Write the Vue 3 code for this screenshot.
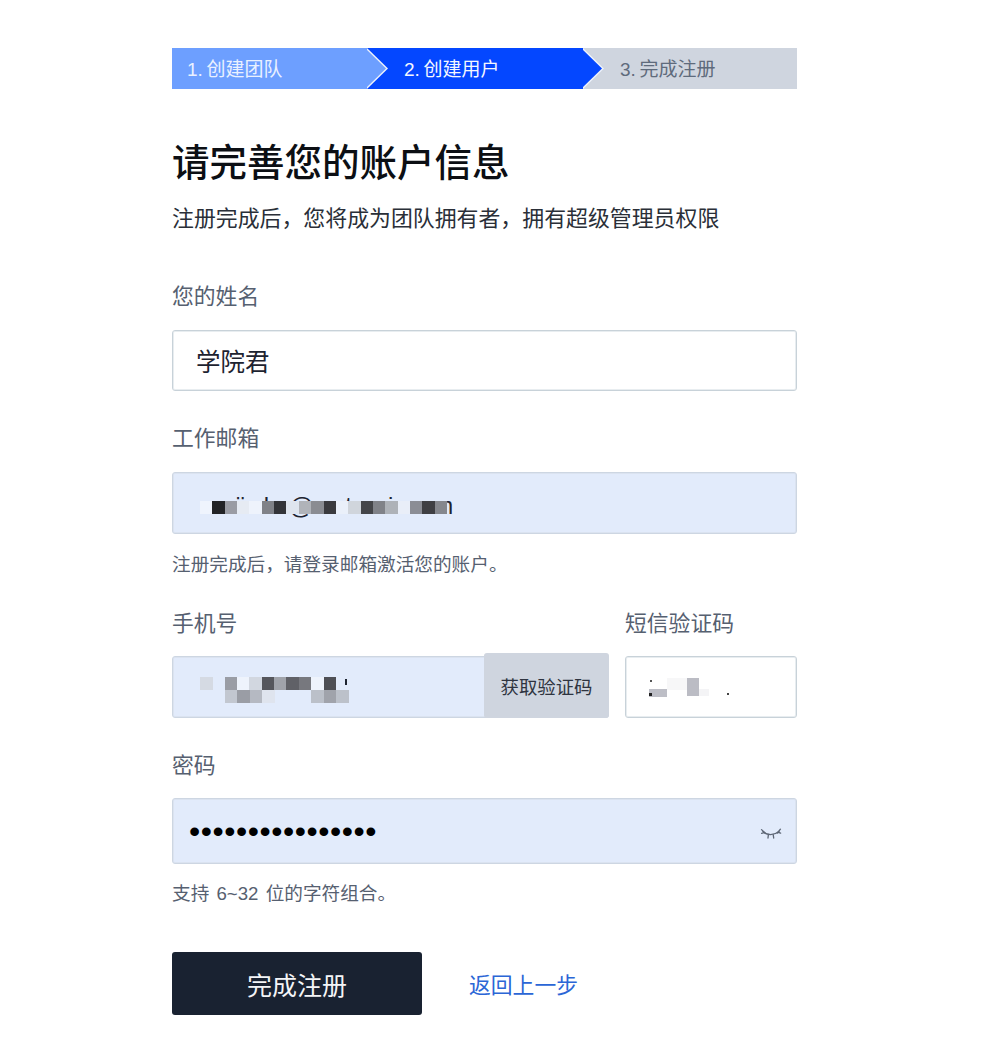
<script setup>
import { ref } from 'vue';

const showPassword = ref(false);

const steps = [
  { label: '1. 创建团队', state: 'done' },
  { label: '2. 创建用户', state: 'active' },
  { label: '3. 完成注册', state: 'todo' },
];

const makeRow = (startX, y, h, colors) =>
  colors.map((color, i) => ({ x: startX + i * 12.35, y, w: 12.5, h, color })).filter(c => c.color);

// the blurred-out parts of the form, relative to their input
const emailCells = makeRow(28, 29, 13, [
  '#eff4fd', '#222326', '#9a9ca4', '#e6ebf3', '#eef3fc', '#808288', '#333438', '#dfe5ee', '#b0b3b9',
  '#8a8c92', '#3a3a3e', '#eaf0fa', '#d0d5dc', '#444549', '#808288', '#aeb2b8', '#e9eef8', '#8b8d95',
  '#3f3f43', '#85878d',
]);

const phoneCells = [
  ...makeRow(28, 21, 13, [
    '#d5dae3', null, '#9a9da5', '#eef3fc', '#d2d7e0', '#55565c', '#a0a3aa', '#606167', '#77787e', '#eef3fc', '#4e4f55',
  ]),
  ...makeRow(53, 34, 13, ['#c2c7d0', '#9a9da5', '#b5b9c2', '#dfe4ee', null, null, null, '#bbc0c9', '#a0a3ab', '#bcc1ca']),
  { x: 173, y: 23, w: 2, h: 6, color: '#1d2330' },
];

const codeCells = [
  { x: 42, y: 22, w: 20, h: 12, color: '#f7f7f8' },
  { x: 62, y: 22, w: 12, h: 18, color: '#bbbcc4' },
  { x: 24, y: 33, w: 18, h: 8, color: '#bdbec6' },
  { x: 74, y: 33, w: 10, h: 7, color: '#f4f4f6' },
  { x: 25, y: 24, w: 2, h: 2, color: '#555' },
  { x: 24, y: 37, w: 3, h: 3, color: '#222' },
  { x: 102, y: 37, w: 2, h: 2, color: '#444' },
];
</script>

<template>
  <div class="page">
    <div class="steps">
      <div v-for="step in steps" :key="step.label" class="step" :class="step.state">{{ step.label }}</div>
    </div>

    <h1 class="title">请完善您的账户信息</h1>
    <p class="subtitle">注册完成后，您将成为团队拥有者，拥有超级管理员权限</p>

    <div class="field first">
      <label class="label">您的姓名</label>
      <input class="input name" type="text" value="学院君" />
    </div>

    <div class="field">
      <label class="label">工作邮箱</label>
      <div class="input-wrap">
        <input class="input filled mail" type="text" value="xxïzrlxr@xxrtxxxi.rcom" />
        <div class="mosaic">
          <i v-for="c in emailCells" :key="c.x" :style="{ left: c.x + 'px', top: c.y + 'px', width: c.w + 'px', height: c.h + 'px', background: c.color }"></i>
        </div>
      </div>
      <p class="hint">注册完成后，请登录邮箱激活您的账户。</p>
    </div>

    <div class="phone-row">
      <div class="field phone">
        <label class="label">手机号</label>
        <div class="input-wrap">
          <input class="input filled" type="text" />
          <div class="mosaic">
            <i v-for="c in phoneCells" :key="c.x + '-' + c.y" :style="{ left: c.x + 'px', top: c.y + 'px', width: c.w + 'px', height: c.h + 'px', background: c.color }"></i>
          </div>
          <button class="send" type="button">获取验证码</button>
        </div>
      </div>
      <div class="field code">
        <label class="label">短信验证码</label>
        <div class="input-wrap">
          <input class="input" type="text" />
          <div class="mosaic">
            <i v-for="c in codeCells" :key="c.x + '-' + c.y" :style="{ left: c.x + 'px', top: c.y + 'px', width: c.w + 'px', height: c.h + 'px', background: c.color }"></i>
          </div>
        </div>
      </div>
    </div>

    <div class="field pass">
      <label class="label">密码</label>
      <div class="input-wrap">
        <input class="input filled password" :type="showPassword ? 'text' : 'password'" value="abcdefghijklmnop" />
        <svg class="eye" width="22" height="14" viewBox="0 0 22 14" fill="none" stroke="#5d6675" stroke-width="1.3" stroke-linecap="round" @click="showPassword = !showPassword">
          <path d="M3 4.5C7 8.6 14 8.6 19 4.5" />
          <path d="M1.5 2.6L5 6M1.6 6.4L4.6 5.4M20.4 2.2L17.4 6M20.6 6.2L17.8 5.2M8.4 7.4L8 11M13.2 7.6L13.7 11" />
        </svg>
      </div>
      <p class="hint">支持 6~32 位的字符组合。</p>
    </div>

    <div class="actions">
      <button class="submit" type="button">完成注册</button>
      <a class="back" href="#">返回上一步</a>
    </div>
  </div>
</template>

<style scoped>
.page {
  box-sizing: border-box;
  width: 625px;
  height: 1054px;
  margin-left: 172px;
  padding-top: 48px;
  font-family: "Liberation Sans", "Noto Sans CJK SC", sans-serif;
  color: #1d2330;
}

.steps {
  display: flex;
  height: 41px;
}

.step {
  position: relative;
  box-sizing: border-box;
  display: flex;
  align-items: center;
  padding-bottom: 3px;
  font-size: 19px;
  word-spacing: -1.5px;
}

.step:nth-child(1) {
  width: 195px;
  padding-left: 15px;
  z-index: 2;
}

.step:nth-child(2) {
  width: 216px;
  padding-left: 37px;
  z-index: 1;
}

.step:nth-child(3) {
  flex: 1;
  padding-left: 37px;
}

.step.done {
  background: #6d9fff;
  color: #eaf1ff;
}

.step.active {
  background: #0447ff;
  color: #f4f7ff;
}

.step.todo {
  background: #cfd5df;
  color: #5f6b7c;
}

.step.done::before,
.step.active::before {
  content: "";
  position: absolute;
  top: 0;
  left: 100%;
  width: 21px;
  height: 100%;
  background: #eef2fb;
  clip-path: polygon(0 0, 100% 50%, 0 100%);
}

.step.done::after,
.step.active::after {
  content: "";
  position: absolute;
  top: 0;
  left: 100%;
  width: 20px;
  height: 100%;
  margin-left: -1px;
  clip-path: polygon(0 1px, 100% 50%, 0 calc(100% - 1px), -1px 100%, -1px 0);
}

.step.done::after {
  background: #6d9fff;
}

.step.active::after {
  background: #0447ff;
}

.title {
  margin: 52px 0 0;
  font-size: 37.5px;
  line-height: 44px;
  font-weight: 500;
  color: #0c0f14;
}

.subtitle {
  margin: 19px 0 0;
  font-size: 21.9px;
  line-height: 30px;
  color: #2a2f38;
}

.field {
  margin-top: 33px;
}

.field.first {
  margin-top: 48px;
}

.label {
  display: block;
  margin-bottom: 18px;
  font-size: 21.8px;
  line-height: 30px;
  color: #566070;
}

.input-wrap {
  position: relative;
}

.input {
  display: block;
  box-sizing: border-box;
  width: 100%;
  height: 62px;
  padding: 0 23px;
  border: 1px solid #c8d2d9;
  border-radius: 3px;
  outline: none;
  background: #fff;
  box-shadow: inset 0 0 0 1px #e8edf0;
  font-family: inherit;
  font-size: 24.5px;
  color: #1d2330;
}

.input.name {
  height: 61px;
}

.input.filled {
  background: #e2ebfb;
  border-color: #cdd6e2;
  box-shadow: inset 0 0 0 1px #dbe3f0;
}

.input.mail {
  padding-top: 6px;
  padding-left: 40px;
  font-size: 24px;
}

.input.password {
  height: 66px;
  padding-left: 16px;
  font-size: 32px;
  letter-spacing: 0.55px;
  color: #000;
}

.mosaic {
  position: absolute;
  inset: 0;
  pointer-events: none;
}

.mosaic i {
  position: absolute;
}

.hint {
  margin: 18px 0 0;
  font-size: 18.65px;
  line-height: 26px;
  word-spacing: 2px;
  color: #566070;
}

.phone-row {
  display: flex;
  justify-content: space-between;
  margin-top: 31px;
}

.phone-row .field {
  margin-top: 0;
}

.phone-row .label {
  margin-bottom: 17px;
}

.phone {
  width: 437px;
}

.code {
  width: 172px;
}

.send {
  position: absolute;
  right: 0;
  top: -3px;
  width: 125px;
  height: 65px;
  border: none;
  border-radius: 3px;
  background: #cfd5df;
  font-family: inherit;
  font-size: 18.4px;
  color: #2e3440;
}

.eye {
  position: absolute;
  right: 15px;
  top: 29px;
}

.field.pass .label {
  margin-bottom: 17px;
}

.field.pass .hint {
  margin-top: 17px;
}

.actions {
  display: flex;
  align-items: center;
  gap: 47px;
  margin-top: 45px;
}

.submit {
  width: 250px;
  height: 63px;
  border: none;
  border-radius: 3px;
  background: #192231;
  font-family: inherit;
  font-size: 25px;
  color: #f4f5f7;
}

.back {
  font-size: 21.8px;
  color: #2b66d6;
  text-decoration: none;
}
</style>
